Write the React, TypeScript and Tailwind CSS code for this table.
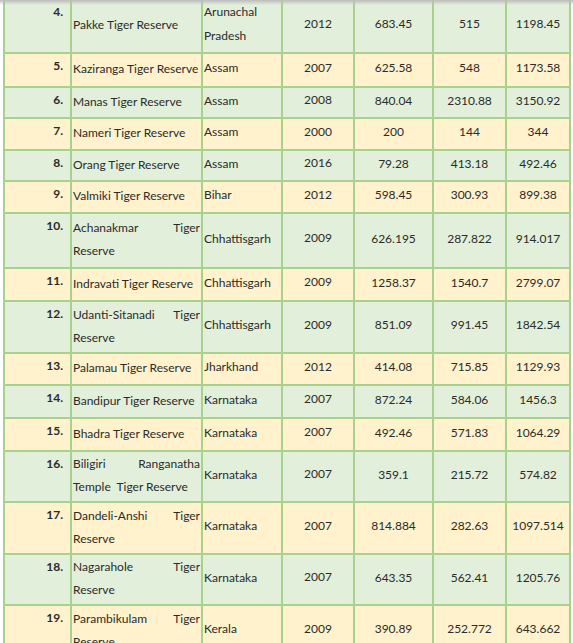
import React from 'react';

interface Reserve {
    no: string;
    name: string[];
    state: string[];
    year: string;
    core: string;
    buffer: string;
    total: string;
    h: string;
}

const rows: Reserve[] = [
    { no: '4.', name: ['Pakke Tiger Reserve'], state: ['Arunachal', 'Pradesh'], year: '2012', core: '683.45', buffer: '515', total: '1198.45', h: 'h-[54px]' },
    { no: '5.', name: ['Kaziranga Tiger Reserve'], state: ['Assam'], year: '2007', core: '625.58', buffer: '548', total: '1173.58', h: 'h-[34px]' },
    { no: '6.', name: ['Manas Tiger Reserve'], state: ['Assam'], year: '2008', core: '840.04', buffer: '2310.88', total: '3150.92', h: 'h-[31px]' },
    { no: '7.', name: ['Nameri Tiger Reserve'], state: ['Assam'], year: '2000', core: '200', buffer: '144', total: '344', h: 'h-[32px]' },
    { no: '8.', name: ['Orang Tiger Reserve'], state: ['Assam'], year: '2016', core: '79.28', buffer: '413.18', total: '492.46', h: 'h-[31px]' },
    { no: '9.', name: ['Valmiki Tiger Reserve'], state: ['Bihar'], year: '2012', core: '598.45', buffer: '300.93', total: '899.38', h: 'h-[32px]' },
    { no: '10.', name: ['Achanakmar Tiger', 'Reserve'], state: ['Chhattisgarh'], year: '2009', core: '626.195', buffer: '287.822', total: '914.017', h: 'h-[55px]' },
    { no: '11.', name: ['Indravati Tiger Reserve'], state: ['Chhattisgarh'], year: '2009', core: '1258.37', buffer: '1540.7', total: '2799.07', h: 'h-[33px]' },
    { no: '12.', name: ['Udanti-Sitanadi Tiger', 'Reserve'], state: ['Chhattisgarh'], year: '2009', core: '851.09', buffer: '991.45', total: '1842.54', h: 'h-[52px]' },
    { no: '13.', name: ['Palamau Tiger Reserve'], state: ['Jharkhand'], year: '2012', core: '414.08', buffer: '715.85', total: '1129.93', h: 'h-[32px]' },
    { no: '14.', name: ['Bandipur Tiger Reserve'], state: ['Karnataka'], year: '2007', core: '872.24', buffer: '584.06', total: '1456.3', h: 'h-[33px]' },
    { no: '15.', name: ['Bhadra Tiger Reserve'], state: ['Karnataka'], year: '2007', core: '492.46', buffer: '571.83', total: '1064.29', h: 'h-[33px]' },
    { no: '16.', name: ['Biligiri Ranganatha', 'Temple\u00a0 Tiger Reserve'], state: ['Karnataka'], year: '2007', core: '359.1', buffer: '215.72', total: '574.82', h: 'h-[51px]' },
    { no: '17.', name: ['Dandeli-Anshi Tiger', 'Reserve'], state: ['Karnataka'], year: '2007', core: '814.884', buffer: '282.63', total: '1097.514', h: 'h-[52px]' },
    { no: '18.', name: ['Nagarahole Tiger', 'Reserve'], state: ['Karnataka'], year: '2007', core: '643.35', buffer: '562.41', total: '1205.76', h: 'h-[51px]' },
    { no: '19.', name: ['Parambikulam Tiger', 'Reserve'], state: ['Kerala'], year: '2009', core: '390.89', buffer: '252.772', total: '643.662', h: 'h-[52px]' },
];

const cell = 'border-r-2 border-[#a9d18e] h-full flex flex-col';

export default function App() {
    return (
        <div className="relative w-[573px] h-[643px] overflow-hidden bg-white font-['Lato','Liberation_Sans',sans-serif] text-[12px] text-[#2b2b2b]">
            <div className="absolute top-0 left-0 right-0 h-[5px] bg-gradient-to-b from-[#bcbcbc] to-[#bcbcbc00] z-10" />
            <div className="ml-[3px] w-[568px] border-l-2 border-[#a9d18e]">
                {rows.map((r, idx) => (
                    <div
                        key={r.no}
                        className={`${r.h} flex border-b-2 border-[#a9d18e] ${idx % 2 === 0 ? 'bg-[#e2efda]' : 'bg-[#fff2cc]'}`}
                    >
                        <div className={`${cell} w-[67px] items-end justify-start pt-[4px] pr-[7px] font-bold leading-[16px]`}>
                            {r.no}
                        </div>
                        <div className={`${cell} w-[131px] justify-center pl-[1px] pr-[1px] pb-[3px] leading-[23px]`}>
                            {r.name.map((line, i) => (
                                <span
                                    key={i}
                                    className={`block whitespace-pre ${i === 0 && r.name.length > 1 ? 'text-justify [text-align-last:justify] whitespace-normal' : ''}`}
                                >
                                    {line}
                                </span>
                            ))}
                        </div>
                        <div className={`${cell} w-[80px] justify-center pl-[1px] pb-[4px] leading-[24px]`}>
                            {r.state.map((s) => (
                                <span key={s}>{s}</span>
                            ))}
                        </div>
                        <div className={`${cell} w-[72px] justify-center items-center pb-[5px]`}>{r.year}</div>
                        <div className={`${cell} w-[79px] justify-center items-center pb-[4px]`}>{r.core}</div>
                        <div className={`${cell} w-[73px] justify-center items-center pb-[4px]`}>{r.buffer}</div>
                        <div className={`${cell} w-[64px] justify-center items-center pb-[4px]`}>{r.total}</div>
                    </div>
                ))}
            </div>
        </div>
    );
}
